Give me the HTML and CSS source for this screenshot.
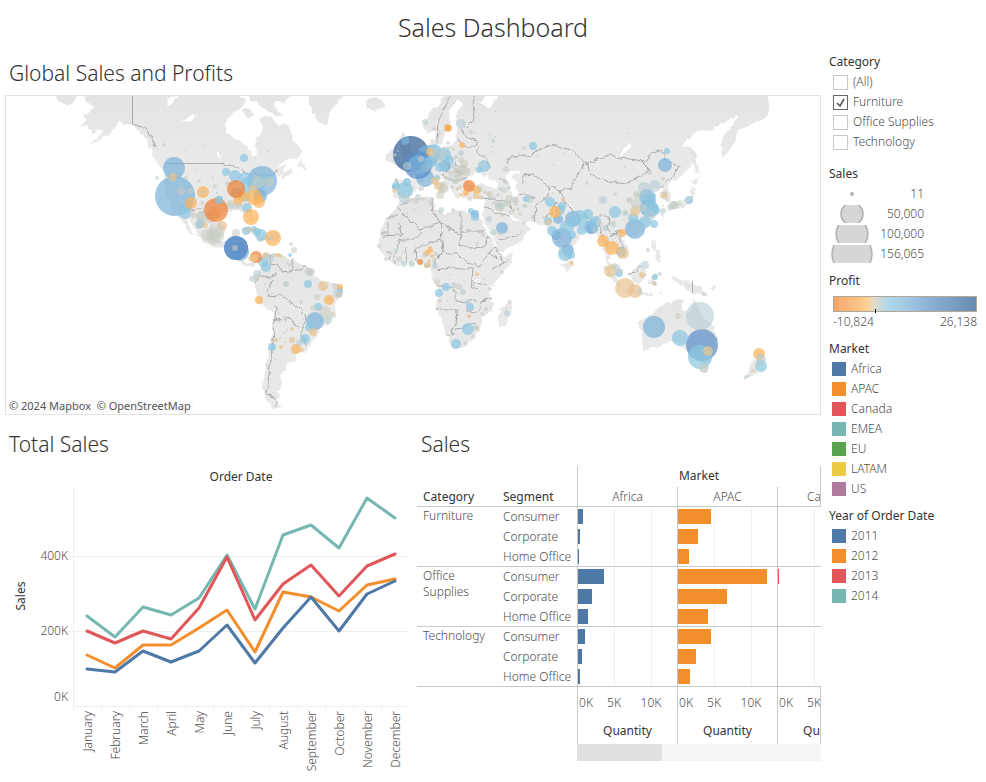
FILE: index.html
```html
<!DOCTYPE html>
<html lang="en">
<head>
<meta charset="utf-8">
<title>Sales Dashboard</title>
<link rel="stylesheet" href="styles.css">
</head>
<body>
<h1 class="page-title">Sales Dashboard</h1>
<div class="dashboard">
<main class="main">
<section>
<h2 class="section-title">Global Sales and Profits</h2>
<div class="map-frame">
<svg class="map" viewBox="6 96 814 318" role="img" aria-label="World map of sales and profit">
<defs><linearGradient id="landFill" x1="0" y1="0" x2="0" y2="1"><stop offset="0" stop-color="#e3e3e3"/><stop offset=".4" stop-color="#e9e9e9"/><stop offset="1" stop-color="#e7e7e7"/></linearGradient>
<filter id="rough" filterUnits="userSpaceOnUse" x="6" y="90" width="814" height="324"><feTurbulence type="fractalNoise" baseFrequency=".14" numOctaves="2" seed="4"/><feDisplacementMap in="SourceGraphic" scale="6" xChannelSelector="R" yChannelSelector="G"/></filter></defs>
<g filter="url(#rough)">
<g class="land">
<path d="M56 90H75V96L73 102 68 107 63 103 57 101ZM83 90H240V96L246 102 241 108 230 115 225 122 227 132 238 140 248 147 250 154 254 156 257 153 255 138 263 132 260 118 265 116 273 118 279 127 284 124 290 131 296 144 302 149 302 155 296 158 284 160 277 168 284 164 287 165 282 170 285 173 292 169 291 175 283 178 280 174 272 178 269 184 262 190 259 197 251 204 249 211 253 220 250 223 246 214 238 211 231 212 220 214 214 222 213 231 219 241 228 242 232 236 238 236 236 245 232 249 240 252 240 261 247 264 254 261 257 264 251 267 243 265 235 257 226 252 222 247 215 248 204 242 198 235 191 223 186 219 194 236 189 232 180 217 173 210 168 199 165 190 165 172 160 166 154 160 151 150 146 141 140 130 133 125 124 124 118 121 115 128 106 136 98 141 87 146 98 138 103 130 97 130 92 134 90 129 82 125 88 119 83 116 92 110 93 106 86 103Z"/>
<path d="M248 90H290V96L284 104 277 100 275 107 283 116 276 116 268 110 260 107 256 101 250 101ZM307 90H343V97L331 110 326 126 318 122 311 109ZM365 103 370 98 383 99 385 106 375 111 367 108ZM243 109 251 109 254 114 246 118ZM297 168 301 157 302 163 307 166 307 171 303 168ZM240 229 248 227 258 232 252 233ZM260 235 271 236 269 240 260 239Z"/>
<path d="M258 272 263 263 260 260 265 254 272 253 280 257 293 258 300 264 310 268 314 277 322 281 333 282 343 288 341 295 335 303 334 317 328 325 320 329 317 334 313 342 307 350 297 354 297 360 286 364 287 370 281 372 282 383 277 392 279 397 274 400 275 404 283 408 273 408 267 402 263 387 264 377 268 353 272 337 274 313 260 303 255 290 252 280Z"/>
<path d="M445 90H768V115L750 125 739 130 735 142 731 150 723 157 721 145 724 136 731 128 738 115 729 120 723 122 713 129 697 131 682 145 693 149 695 157 690 167 681 176 670 183 669 187 671 199 664 201 661 188 655 187 648 192 657 203 658 213 650 225 640 233 632 237 623 234 622 238 628 246 626 255 619 260 615 252 609 252 609 260 615 268 615 272 608 265 605 253 601 245 597 232 592 225 580 234 574 245 571 257 566 263 561 254 554 240 551 231 544 226 533 223 518 220 510 212 507 214 514 221 523 222 531 229 522 241 503 251 498 252 492 236 483 219 484 207 485 200 475 199 464 198 458 188 460 197 457 199 450 187 440 176 438 179 448 187 444 193 438 188 430 181 420 184 415 191 409 198 400 199 394 197 396 180 413 179 405 168 414 163 418 156 431 149 430 139 435 141 437 147 450 147 456 139 457 129 470 125 457 126 455 116 463 103 457 100 449 112 450 121 442 144 437 141 434 129 426 133 423 122 431 111 439 105Z"/>
<path d="M395 164 404 161 402 148 398 140 404 132 408 140 415 159 401 168 392 163 386 162 386 153 392 149 398 153Z"/>
<path d="M398 201 413 198 433 197 435 207 446 215 453 210 473 213 480 217 488 233 498 252 503 256 513 254 511 262 503 272 491 287 489 293 493 305 492 311 482 317 482 327 473 339 463 347 452 349 447 336 443 327 442 318 435 310 439 297 437 286 431 278 432 268 425 268 417 262 406 263 398 267 388 260 378 248 380 233 387 217 395 210ZM510 301 513 306 505 327 500 328 498 319 501 309Z"/>
<path d="M664 214 661 219 660 212ZM667 207 681 203 689 201 692 186 696 189 694 200 684 207 671 211ZM691 181 699 177 696 184ZM691 149 696 152 696 163 700 173 694 171ZM651 240 656 241 655 247 661 254 661 263 654 260 657 254 651 248ZM602 265 609 267 622 285 618 287 607 274ZM629 274 640 264 646 268 645 278 640 284 632 282ZM650 275 660 273 654 278 657 286 651 286ZM622 289 642 292 656 294 644 296 623 291ZM671 277 682 280 690 282 702 288 708 297 697 293 691 294 684 287 673 282ZM710 288 716 285 714 291ZM561 265 568 262 570 267 567 271Z"/>
<path d="M638 322 654 313 662 305 670 303 673 299 684 300 682 308 690 314 693 298 697 304 699 312 706 319 714 327 717 338 711 361 703 364 690 357 684 347 671 341 656 347 643 350 642 337ZM699 367 708 367 706 373 701 372ZM754 359 762 359 758 371 752 375 744 381 746 376Z"/>
</g>
<g class="water"><path d="M467 185 469 177 479 172 482 176 489 175 488 178 498 184 496 188 483 184ZM505 177 511 171 517 170 512 178 517 183 515 189 519 193 515 196 510 190ZM486 96 497 96 498 100 492 101 492 107 485 106 481 101ZM515 170H520L518 175ZM619 156 629 143 631 141 629 148 623 156ZM181 121 192 115 197 117 188 123ZM166 99 178 96 173 102 169 105ZM237 176 246 172 249 176 245 184 241 178ZM216 150 220 153 221 160 218 157ZM474 279 480 279 478 284Z"/></g>
<g class="borders">
<path d="M142 127 144 127 150 136 155 142 154 147M224 163 226 166 235 167 243 170 248 175M180 207 190 210 201 209 208 214M256 174 265 175 273 174 278 170"/>
<path d="M271 255 270 264 278 265 283 272 293 270 292 259M295 270 301 270 304 264 310 270M252 283 262 276 273 278 275 271M273 280 267 290 270 297 280 295 289 300 298 308 304 314 305 322 300 332 304 337 306 347M276 305 275 319 284 322 290 317 294 323 300 327M275 319 273 341 270 366 268 385 267 394 276 398 276 406"/>
<path d="M397 207 420 230 440 223 461 235V212M387 216H399M400 205 410 202M431 198 433 212 440 222M461 231H484M380 233H389V222M399 223 401 235 383 236M422 232 415 240 400 240 397 249M440 223 442 240 426 244 418 248M461 235 459 245 470 248 484 247 489 236M442 240 443 252 435 260 435 267M443 252 457 254 466 263 480 266 489 253 498 258M395 250V264M405 247 407 262M415 246 416 262M388 252 390 260M437 270 450 267 473 269 472 280 471 287 477 290M437 286H448L456 292 456 301 466 303 472 299 478 304M437 310H457L456 325 452 328 453 335 446 335M454 329 464 328 470 323 477 324M466 311 478 312 483 300 492 297M472 281 488 285M493 269 508 260M489 253 494 247 505 262"/>
<path d="M472 90 474 112 472 122 466 128M438 140 439 120 445 106 452 90M462 130 468 139 477 142 478 154 488 160 489 168M454 157 456 166 467 166M446 153 449 168 442 175 450 180 460 180 468 177M456 171 464 174M430 164 428 175M420 158 425 166M397 180 399 196M481 199 490 198 497 201 505 200M484 207 495 212 510 216M507 202 515 210M507 164 506 159 518 155 528 157 531 153 541 149 552 144 563 148 574 151 583 162 588 164 600 158 610 155 621 158 636 160 645 162 652 152 660 150 668 160 679 167 674 176 660 188M588 164 590 175 604 180 625 184 640 176 650 170 642 162M523 186V176L534 175 549 186 560 190 571 188 577 176 584 164M549 186 548 196 536 206 534 222M560 190 566 204 578 216 594 221 602 215 609 219 607 230 619 238 625 250M536 198 524 195 518 194M544 219 553 211 558 199M594 221 600 226 602 236 608 246M611 237 617 231 623 233M499 240 515 237 524 230M629 274 636 273 641 266M499 178 506 183M457 140 465 146 476 145"/>
</g>
</g>
<path class="borders" d="M132.500 96V124L142 127M165 163.500H224M692.500 281V293"/>
<g id="bubbles"></g>
</svg>
<p class="attribution">© 2024 Mapbox&nbsp; © OpenStreetMap</p>
</div>
</section>
<div class="lower">
<section>
<h2 class="section-title lower-title">Total Sales</h2>
<svg class="line-chart" viewBox="5 466 412 310" role="img" aria-label="Sales by month and year">
<text class="chart-heading" x="241" y="481" text-anchor="middle">Order Date</text>
<text class="chart-heading" transform="translate(25 596) rotate(-90)" text-anchor="middle">Sales</text>
<path class="grid-line" d="M68 556.5H409M68 631.5H409"/>
<path class="axis" d="M73.5 487V706.5H409M73.5 706V711M101.5 706V711M129.5 706V711M157.5 706V711M185.5 706V711M213.5 706V711M241.5 706V711M269.5 706V711M297.5 706V711M325.5 706V711M353.5 706V711M381.5 706V711"/>
<g class="tick" text-anchor="end"><text x="68" y="560">400K</text><text x="68" y="635">200K</text><text x="68" y="701">0K</text></g>
<g class="series">
<polyline stroke="#76b7b2" points="87,616 115,637 143,607 171,615 199,598 227,555 255,609 283,535 311,525 339,548 367,498 395,518"/>
<polyline stroke="#e15759" points="87,631 115,643 143,631 171,639 199,608 227,557 255,620 283,584 311,565 339,596 367,566 395,554"/>
<polyline stroke="#f28e2b" points="87,655 115,668 143,645 171,645 199,628 227,610 255,652 283,592 311,597 339,611 367,585 395,579"/>
<polyline stroke="#4e79a7" points="87,669 115,672 143,651 171,662 199,651 227,625 255,663 283,628 311,597 339,631 367,594 395,581"/>
</g>
<g class="tick" id="months" text-anchor="end"></g>
</svg>
</section>
<section>
<h2 class="section-title lower-title">Sales</h2>
<table class="bars">
<colgroup><col class="col-label"><col class="col-label"><col class="col-market"><col class="col-market"><col></colgroup>
<thead>
<tr><td colspan="2"></td><th class="market-head" colspan="3" scope="colgroup">Market</th></tr>
<tr class="names"><th scope="col">Category</th><th scope="col">Segment</th><th class="pane light" scope="col">Africa</th><th class="pane light" scope="col">APAC</th><th class="pane light last" scope="col"><div class="wide">Canada</div></th></tr>
</thead>
<tbody id="barRows"></tbody>
<tfoot><tr><td colspan="2"></td>
<td class="pane"><div class="scale"><span>0K</span><span>5K</span><span>10K</span></div><div class="measure">Quantity</div></td>
<td class="pane"><div class="scale"><span>0K</span><span>5K</span><span>10K</span></div><div class="measure">Quantity</div></td>
<td class="pane last"><div class="wide"><div class="scale"><span>0K</span><span>5K</span></div><div class="measure">Quantity</div></div></td></tr></tfoot>
</table>
<div class="scroll-track"><div class="scroll-thumb"></div></div>
</section>
</div>
</main>
<aside class="side">
<fieldset class="filter"><legend>Category</legend>
<label><input type="checkbox">(All)</label>
<label><input type="checkbox" checked>Furniture</label>
<label><input type="checkbox">Office Supplies</label>
<label><input type="checkbox">Technology</label>
</fieldset>
<section class="legend"><h3>Sales</h3>
<ul class="sizes">
<li><svg viewBox="0 0 44 20"><circle class="tiny" cx="22" cy="10" r="2"/></svg><span>11</span></li>
<li><svg viewBox="0 0 44 20"><svg y="1" width="44" height="18" viewBox="0 1 44 18"><circle cx="22" cy="10" r="11"/></svg></svg><span>50,000</span></li>
<li><svg viewBox="0 0 44 20"><svg y="1" width="44" height="18" viewBox="0 1 44 18"><circle cx="22" cy="10" r="16"/></svg></svg><span>100,000</span></li>
<li><svg viewBox="0 0 44 20"><svg y="1" width="44" height="18" viewBox="0 1 44 18"><circle cx="22" cy="10" r="20"/></svg></svg><span>156,065</span></li>
</ul></section>
<section class="legend profit"><h3>Profit</h3><div class="ramp"></div><div class="ramp-labels"><span>-10,824</span><span>26,138</span></div></section>
<section class="legend market"><h3>Market</h3>
<ul class="keys"><li><i class="blue"></i>Africa</li><li><i class="orange"></i>APAC</li><li><i class="red"></i>Canada</li><li><i class="teal"></i>EMEA</li><li><i class="green"></i>EU</li><li><i class="yellow"></i>LATAM</li><li><i class="purple"></i>US</li></ul></section>
<section class="legend"><h3>Year of Order Date</h3>
<ul class="keys"><li><i class="blue"></i>2011</li><li><i class="orange"></i>2012</li><li><i class="red"></i>2013</li><li><i class="teal"></i>2014</li></ul></section>
</aside>
</div>
<script src="script.js"></script>
</body>
</html>
```
FILE: styles.css
```css
* { box-sizing: border-box; }
body { margin: 0; background: #fff; color: #4d4d4d; font-family: "Noto Sans", "Open Sans", sans-serif; font-size: 12px; font-weight: 300; line-height: 20px; }
h1, h2, h3, p, ul { margin: 0; padding: 0; font-weight: 300; }
ul { list-style: none; }
.page-title { padding-top: 9px; height: 52px; text-align: center; font-size: 25px; line-height: 36px; color: #333; }
.dashboard { display: grid; grid-template-columns: minmax(0, 1fr) 157px; column-gap: 8px; padding-left: 5px; }
.section-title { height: 43px; padding: 6px 4px 0; font-size: 21px; line-height: 30px; color: #333; }
.lower-title { height: 51px; padding-top: 14px; }
.map-frame { position: relative; border: 1px solid #e2e2e2; overflow: hidden; }
.map { display: block; width: 100%; height: auto; }
.attribution { position: absolute; left: 1px; bottom: 1px; padding: 0 2px; background: rgba(250,250,250,.8); font-size: 11px; line-height: 14px; font-weight: 400; color: #555; }
.land { fill: url(#landFill); }
.water { fill: #fff; }
.borders { fill: none; stroke: #aaa; stroke-width: 1; }
.bubble { fill-opacity: .72; }
.bubble.faint { fill-opacity: .58; }
.lower { display: grid; grid-template-columns: 412fr 404fr; }
.line-chart { display: block; width: 100%; height: auto; }
.line-chart text { font-size: 12px; fill: #4d4d4d; }
.line-chart .chart-heading { fill: #333; font-weight: 400; }
.grid-line, .axis { fill: none; stroke: #efefef; }
.series { fill: none; stroke-width: 3; stroke-linejoin: round; stroke-linecap: round; }
.bars { width: 100%; table-layout: fixed; border-collapse: separate; border-spacing: 0; }
.col-label { width: 80px; }
.col-market { width: 100px; }
.bars th, .bars td { padding: 0; height: 20px; font-weight: 300; text-align: left; vertical-align: top; white-space: nowrap; }
.bars thead th { font-weight: 400; color: #333; }
.bars thead tr:first-child th, .bars thead tr:first-child td { height: 21px; }
.bars .names th, .bars .group-end > * { line-height: 19px; border-bottom: 1px solid #c8c8c8; }
.bars .market-head { text-align: center; border-left: 1px solid #c8c8c8; border-right: 1px solid #c8c8c8; }
.bars .pane { border-left: 1px solid #c8c8c8; }
.bars thead .light { text-align: center; color: #4d4d4d; font-weight: 300; }
.bars .last { overflow: hidden; border-right: 1px solid #c8c8c8; }
.bars tbody .last { border-right: 0; }
.bars .names th:nth-child(-n+2), .bars .category, .bars .segment { padding-left: 6px; }
.bars .category { padding-top: 1px; line-height: 16px; white-space: normal; border-bottom: 1px solid #c8c8c8; }
.bars .pane.plot { padding-top: 2px; background: linear-gradient(#efefef, #efefef) 36px 0 / 1px 100% no-repeat, linear-gradient(#efefef, #efefef) 73px 0 / 1px 100% no-repeat; }
.bar { height: 15px; }
.wide { width: 99px; }
.scale { display: grid; grid-template-columns: 16px 40px 34px; justify-content: start; padding-top: 6px; text-align: center; }
.measure { padding: 8px 0 3px; text-align: center; font-weight: 400; color: #333; }
.scroll-track { margin-left: 160px; height: 17px; background: #f4f4f4; }
.scroll-thumb { width: 35%; height: 17px; background: #e0e0e0; }
.filter { border: 0; margin: 0 0 12px; padding: 0; }
.filter legend, .legend h3 { padding: 0; font-size: 12px; line-height: 20px; font-weight: 400; color: #333; }
.filter label { display: flex; align-items: center; gap: 5px; height: 20px; padding-left: 4px; }
.filter input { appearance: none; flex: none; width: 15px; height: 15px; margin: 0; border: 1px solid #c8c8c8; background: #fff; }
.filter input:checked { border-color: #666; background: #fff url("data:image/svg+xml,%3Csvg xmlns='http://www.w3.org/2000/svg' viewBox='0 0 13 13'%3E%3Cpath d='M3 7l3 3 4-7' fill='none' stroke='%23555' stroke-width='1.6'/%3E%3C/svg%3E"); }
.legend { margin-bottom: 7px; }
.sizes li { display: flex; height: 20px; width: 95px; justify-content: space-between; }
.sizes li > svg { flex: none; width: 44px; height: 20px; margin-left: 1px; }
.sizes circle { fill: #d6d6d6; stroke: #b0b0b0; stroke-width: 1.5; }
.sizes .tiny { fill: #b0b0b0; stroke: none; }
.sizes span { flex: 1; text-align: right; }
.ramp { position: relative; margin: 5px 9px 0 4px; height: 16px; border: 1px solid #b0a999; background: linear-gradient(90deg, #f5a468, #ffcf94 23%, #dcdcd0 29%, #b3d8ea 38%, #8fb4d6 65%, #688bb0); }
.ramp::after { content: ""; position: absolute; left: 29%; top: 12px; width: 1px; height: 4px; background: #000; }
.ramp-labels { display: flex; justify-content: space-between; margin: 0 9px 0 4px; }
.keys li { display: flex; align-items: center; gap: 5px; height: 20px; padding-left: 3px; }
.keys i { width: 14px; height: 14px; }
.blue { background: #4e79a7; }
.orange { background: #f28e2b; }
.red { background: #e15759; }
.teal { background: #76b7b2; }
.green { background: #59a14f; }
.yellow { background: #edc948; }
.purple { background: #b07aa1; }
```
FILE: script.js
```js
const tones = { a: '#ef8136', b: '#fdb357', c: '#e9c493', d: '#c8ccc0', e: '#b4cbd0', f: '#8cc6e1', g: '#7bb1da', h: '#5b8fc7', i: '#315e94' };
// Each entry: tone, then x y radius triples.
const bubbles = {
  d: `164 145 2 186 150 1 203 146 1 268 151 1 195 170 1 199 181 2 213 177 1 215 186 2 186 178 2 227 183 2 217 193 1 202 203 2 181 191 4 190 191 3 230 203 3 235 206 3 193 215 3 201 216 5 210 218 5 207 235 6 217 230 8 236 233 4 248 230 3 253 230 2 265 256 3 274 255 2 281 256 2 291 244 2 294 250 3 290 265 2 309 272 4 256 278 3 335 286 3 317 297 3 286 284 2 301 302 2 313 308 3 325 312 6 333 315 3 285 318 2 279 313 1 275 306 1 303 319 1 290 304 1 284 333 1 280 338 1 274 333 1 287 330 1 302 333 1 269 352 1 267 366 1 268 349 1 275 359 1 265 284 1 272 294 1 292 322 1 280 322 1 268 269 1 290 272 1 287 263 1
  434 129 2 431 148 1 437 142 2 439 133 2 465 127 1 471 132 2 475 133 1 495 111 1 490 135 1 493 152 1 492 147 1 495 137 1 484 156 2 483 164 2 476 168 1 468 170 2 464 164 4 461 160 3 456 157 2 453 149 2 448 148 2 443 153 3 440 160 3 434 153 5 425 168 4 444 188 5 440 195 4 443 184 3 446 178 2 451 173 3 455 177 2 458 172 5 463 169 4 466 172 4 460 177 4 455 181 3 452 187 2 460 187 2 470 199 2 480 189 3 485 192 2 490 194 3 494 198 2 498 195 2 504 190 3 509 199 4 514 200 3 508 204 3 500 207 5 494 203 2 502 215 2 511 212 3 518 209 2 526 206 2 533 217 2 524 223 2 520 214 2 516 203 3 500 234 2 498 243 1 483 235 2 477 244 2 453 210 2 441 212 1 430 202 2 423 199 2 416 201 3 411 200 2 414 210 1 407 213 1 397 245 1 403 252 1 379 246 2 386 259 2 399 259 3 391 253 2 411 264 2 419 262 1 425 255 3 427 265 3 434 260 2 436 254 2 440 268 1 437 282 3 440 301 2 447 301 1 450 275 1 459 287 3 464 281 1 473 284 2 478 281 1 484 279 1 502 272 2 490 289 2 480 291 1 486 309 2 482 314 2 490 307 1 510 302 2 506 308 1 476 328 3 465 343 2 473 336 2 470 310 1
  524 148 2 538 156 1 564 154 1 554 165 1 553 193 1 587 183 2 506 169 3 507 183 2 520 150 1 629 133 1 625 167 1 649 172 3 663 179 2 637 195 4 630 200 3 636 204 5 643 208 4 615 194 2 624 220 1 626 213 2 620 237 2 668 200 2 670 207 3 675 205 4 680 203 3 685 201 2 663 206 1 690 199 2 599 224 3 614 266 3 620 271 3 645 275 1 654 283 2 640 292 2 651 293 1 661 293 1 688 286 1 704 294 2 704 368 5 757 366 2 753 371 2 749 376 1 678 316 3 421 188 3 397 189 2`,
  e: `425 122 3 461 124 5 448 143 2 493 141 2 461 153 3 453 166 3 456 170 2 450 178 2 418 197 3 441 210 3 494 232 3 489 219 3 490 198 2 499 206 4 505 181 2 509 188 2 505 203 3 529 199 4 516 199 2 524 206 2 500 189 2 457 182 2 404 198 5 396 181 2 396 250 2 404 264 3 412 264 3 435 266 3 454 285 3 463 292 3 468 302 3 477 328 2 507 313 3 461 288 1 286 284 3 311 272 4 328 320 4 338 293 5 270 258 4 257 274 4 252 279 3 299 343 3 215 236 6 199 225 4 202 217 6 260 239 3 270 238 2 249 229 3 230 206 3 239 206 3 230 184 2 203 192 2 157 178 2 665 194 2 655 186 6 644 188 6 603 200 4 613 214 1 625 213 3 628 200 2 613 224 3 650 215 5 673 205 4 637 195 2 605 228 3 648 250 2 645 265 4 660 274 2 649 283 1 617 267 3 640 290 2 761 359 5 746 377 2 595 230 3 663 211 3`,
  f: `244 158 4 226 172 4 235 176 6 245 178 6 249 185 8 237 193 6 245 197 5 219 200 4 247 208 5 185 213 6 200 224 4 246 231 4 254 229 3 261 235 6 257 232 4 263 262 5 266 267 5 290 255 2 308 284 4 318 307 4 310 327 5 272 347 4 305 339 5 340 290 3 407 182 4 405 190 8 396 186 4 440 167 5 450 160 4 444 155 7 435 150 6 430 162 6 484 166 6 479 170 3 471 211 3 475 217 4 526 199 3 533 146 4 550 202 5 562 206 4 567 227 7 580 218 8 572 235 4 548 221 4 552 231 5 565 254 7 571 255 4 588 214 5 582 230 5 560 210 5 595 222 6 667 151 3 615 212 6 633 218 5 645 222 6 654 224 4 654 210 6 646 209 6 653 196 3 619 273 4 655 277 3 446 287 4 439 293 4 470 307 4 468 329 6 456 344 5 395 187 3 700 357 12 680 338 8 761 366 6 500 206 2 437 178 3 260 182 5 265 179 6 650 200 6 689 200 4`,
  g: `174 168 11 175 196 20 262 181 15 240 252 9 260 196 7 428 156 11 425 178 9 445 166 6 502 228 6 573 219 8 562 238 10 556 235 5 568 250 6 558 219 5 591 227 7 649 208 9 647 197 8 635 229 10 665 165 7 621 252 5 654 327 11 315 321 9 475 214 4 592 228 6`,
  c: `173 177 4 195 201 2 253 189 4 215 213 6 205 225 3 222 226 5 250 259 2 254 258 4 274 237 5 266 255 3 276 255 2 285 257 1 323 286 5 339 295 3 313 332 4 292 329 2 292 340 3 281 347 2 276 340 2 294 352 2 302 350 2 285 342 1 324 289 1 458 189 2 461 195 2 435 181 4 438 186 4 441 190 3 431 152 3 394 191 2 476 196 3 480 197 2 489 194 2 477 274 2 471 312 1 469 316 2 432 256 2 429 261 2 430 248 2 435 252 1 664 195 4 635 211 5 623 253 6 610 271 6 625 288 10 635 291 7 642 275 3 759 356 3 655 284 2 548 222 3 563 200 2 529 197 1 572 264 2 571 262 2`,
  b: `203 192 6 191 203 6 251 217 8 254 197 8 259 202 6 242 196 5 238 201 5 273 238 8 279 255 2 329 300 5 340 287 3 259 300 4 296 349 5 253 256 2 448 128 4 462 145 3 477 190 4 466 193 3 430 250 3 427 253 3 429 265 2 426 266 2 477 275 1 469 317 1 555 212 6 622 233 4 603 241 6 612 248 7 759 354 6 430 152 4`,
  a: `256 257 6 469 186 6 420 262 3 448 128 3`,
  h: `418 165 14 702 345 16`,
  i: `411 154 18`
};
// Marks drawn last, over the large circles.
const upper = [[236, 189, 9, 'a'], [216, 210, 12, 'a'], [236, 248, 12, 'h'], [236, 248, 12, 'h'], [418, 165, 10, 'g'], [219, 200, 4, 'f'], [215, 236, 9, 'd'], [258, 182, 6, 'd'], [269, 182, 5, 'd'], [700, 316, 14, 'e'], [708, 351, 5, 'c'], [235, 248, 3, 'd'], [407, 166, 4, 'e'], [421, 159, 3, 'd'], [398, 151, 1, 'd'], [395, 155, 2, 'd'], [405, 141, 4, 'g']];
const layer = document.getElementById('bubbles');
const NS = 'http://www.w3.org/2000/svg';
function bubble(x, y, r, tone) {
  const c = document.createElementNS(NS, 'circle');
  c.setAttribute('cx', x);
  c.setAttribute('cy', y);
  c.setAttribute('r', r);
  c.setAttribute('fill', tones[tone]);
  c.setAttribute('class', tone === 'd' || tone === 'e' ? 'bubble faint' : 'bubble');
  layer.append(c);
}
for (const tone of ['i', 'g', 'h', 'f', 'a', 'b', 'c', 'e', 'd']) {
  const n = bubbles[tone].trim().split(/\s+/).map(Number);
  for (let k = 0; k < n.length; k += 3) bubble(n[k], n[k + 1], n[k + 2], tone);
}
upper.forEach(mark => bubble(...mark));

const months = ['January', 'February', 'March', 'April', 'May', 'June', 'July', 'August', 'September', 'October', 'November', 'December'];
months.forEach((name, k) => {
  const t = document.createElementNS(NS, 'text');
  t.setAttribute('transform', `translate(${92 + 28 * k} 711) rotate(-90)`);
  t.textContent = name;
  document.getElementById('months').append(t);
});

const groups = [
  ['Furniture', [[5, 33, 0], [2, 20, 0], [1, 11, 0]]],
  ['Office Supplies', [[26, 89, 1], [14, 49, 0], [10, 30, 0]]],
  ['Technology', [[7, 33, 0], [4, 18, 0], [2, 12, 0]]]
];
const segments = ['Consumer', 'Corporate', 'Home Office'];
const colors = ['blue', 'orange', 'red'];
document.getElementById('barRows').innerHTML = groups.map(([name, rows]) => rows.map((row, r) =>
  `<tr class="${r === 2 ? 'group-end' : ''}">${r === 0 ? `<th class="category" scope="rowgroup" rowspan="3">${name}</th>` : ''}<th class="segment" scope="row">${segments[r]}</th>` +
  row.map((w, k) => `<td class="pane plot ${k === 2 ? 'last' : ''}"><div class="bar ${colors[k]}" style="width:${w}px"></div></td>`).join('') + '</tr>').join('')).join('');
```
